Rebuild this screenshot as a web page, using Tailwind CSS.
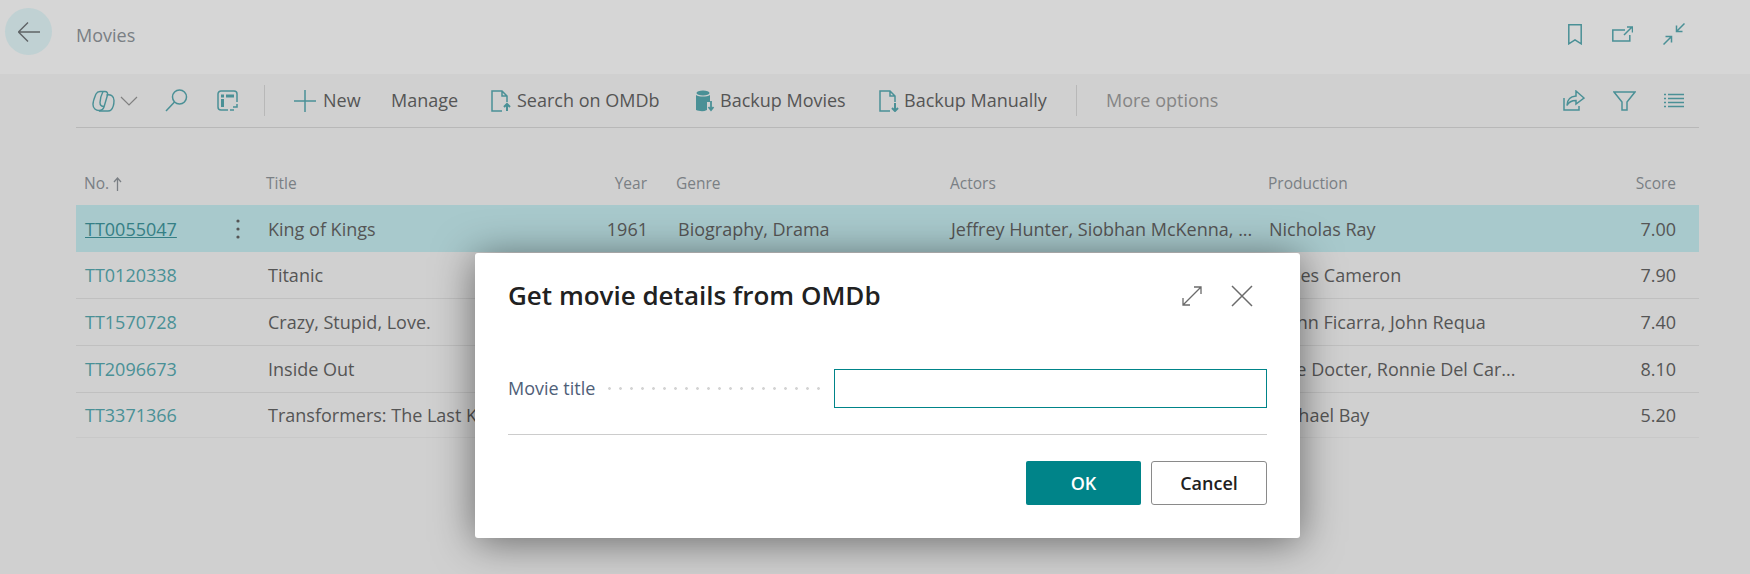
<!DOCTYPE html>
<html lang="en">
<head>
    <meta charset="UTF-8">
    <title>Movies</title>
    <script src="https://cdn.jsdelivr.net/npm/@tailwindcss/browser@4"></script>
</head>
<body class="font-['Open_Sans','Liberation_Sans',sans-serif] bg-[#d0d0d0]">
<div class="relative w-[1750px] h-[574px] overflow-hidden">

    <!-- page header -->
    <header class="flex items-center h-[74px] bg-[#d6d6d6] pl-[5px] pr-[65px]">
        <button class="flex items-center justify-center w-[47px] h-[47px] rounded-full bg-[#c0d1d3] -mt-[11px]">
            <svg width="22" height="20" viewBox="0 0 22 20" fill="none" stroke="#5f6466" stroke-width="1.4"><path d="M0.500 10H22M10 0.500 0.500 10l9.500 9.500"/></svg>
        </button>
        <span class="ml-[24px] text-[18px] text-[#7a7f84] -mt-[3px]">Movies</span>
        <div class="ml-auto flex items-center gap-[30px] -mt-[6px] text-[#4a9096]">
            <svg width="14" height="21" viewBox="0 0 14 21" fill="none" stroke="currentColor" stroke-width="1.5"><path d="M0.800 0.800h12.400v19l-6.200-4-6.200 4z"/></svg>
            <svg width="21" height="16" viewBox="0 0 21 16" fill="none" stroke="currentColor" stroke-width="1.5"><path d="M13 4H0.800v11h17V9M12 9l8-8M15 1h5.500v5.500"/></svg>
            <svg width="22" height="22" viewBox="0 0 22 22" fill="none" stroke="currentColor" stroke-width="1.5"><path d="M21.500 0.500 13.500 8.500M13.500 2.500v6h6M0.500 21.500l8-8M2.500 13.500h6v6"/></svg>
        </div>
    </header>

    <!-- action bar -->
    <div class="mx-[76px] w-[1623px] flex items-center h-[54px] border-b border-[#b8b8b8] text-[18px] text-[#555] text-nowrap">
        <svg class="ml-[16px]" width="23" height="22" viewBox="0 0 23 22" fill="none" stroke="#4a9096" stroke-width="1.4"><path d="M8 1.500h5c2 0 3 1.500 2.500 3.500L12 17c-.8 2.500-2.500 3.500-5 3.500-3 0-6-2-6-6 0-4 2-8 3-10.500C4.800 2.500 6 1.500 8 1.500z"/><path d="M14.500 5c4-1 7.500 1 7.500 5.500 0 4-1.500 8-3 9.500-1 1-2 1-3 1H7M11 1.500c-2 4-3 8-3 11 0 3 2 4 4 4"/></svg>
        <svg class="ml-[5px]" width="18" height="10" viewBox="0 0 18 10" fill="none" stroke="#808080" stroke-width="1.2"><path d="m1 1 8 8 8-8"/></svg>
        <svg class="ml-[27px]" width="23" height="23" viewBox="0 0 23 23" fill="none" stroke="#4a9096" stroke-width="1.5"><circle cx="14.500" cy="8" r="7"/><path d="M9.500 13 1 22"/></svg>
        <svg class="ml-[29px]" width="21" height="21" viewBox="0 0 21 21" fill="none" stroke="#4a9096" stroke-width="1.500"><path d="M11 20H4a3 3 0 0 1-3-3V4a3 3 0 0 1 3-3h13a3 3 0 0 1 3 3v8"/><rect x="4" y="4.500" width="3" height="3" fill="#4a9096" stroke="none"/><rect x="4" y="9" width="3" height="8" fill="#4a9096" stroke="none"/><rect x="9" y="4.500" width="8" height="3" fill="#4a9096" stroke="none"/><path d="M20 14v3h-4M13 20h4"/></svg>
        <div class="ml-[26px] w-px h-[31px] bg-[#b8b8b8]"></div>
        <svg class="ml-[29px]" width="22" height="22" viewBox="0 0 22 22" fill="none" stroke="#4a9096" stroke-width="1.5"><path d="M11 0v22M0 11h22"/></svg>
        <span class="ml-[7px] w-[38px]">New</span>
        <span class="ml-[30px] w-[68px]">Manage</span>
        <svg class="ml-[32px]" width="20" height="22" viewBox="0 0 20 22" fill="none" stroke="#4a9096" stroke-width="1.5"><path d="M11 21H1V1h10l5 5v6M11 1v5h5"/><path d="M16 21v-6M13 17l3-3 3 3" stroke-width="2"/></svg>
        <span class="ml-[6px] w-[145px]">Search on OMDb</span>
        <svg class="ml-[34px]" width="19" height="22" viewBox="0 0 19 22" fill="none"><ellipse cx="7" cy="3" rx="6.500" ry="2.500" fill="#4a9096"/><path d="M0 5c3 2 11 2 14 0v7h-3v8c-4 2-8 1-11 0z" fill="#4a9096"/><path d="M15 11v9M12.500 17l2.500 3 2.500-3" stroke="#4a9096" stroke-width="1.800"/></svg>
        <span class="ml-[5px] w-[127px]">Backup Movies</span>
        <svg class="ml-[32px]" width="20" height="22" viewBox="0 0 20 22" fill="none" stroke="#4a9096" stroke-width="1.5"><path d="M11 21H1V1h10l5 5v6M11 1v5h5"/><path d="M16 13v7M13 18l3 3 3-3" stroke-width="2"/></svg>
        <span class="ml-[5px] w-[144px]">Backup Manually</span>
        <div class="ml-[28px] w-px h-[31px] bg-[#b8b8b8]"></div>
        <span class="ml-[29px] w-[115px] text-[#858585]">More options</span>
        <div class="ml-auto mr-[15px] flex items-center gap-[28px]">
            <svg width="22" height="21" viewBox="0 0 22 21" fill="none" stroke="#4a9096" stroke-width="1.5"><path d="M1 8v12h15v-4M13 1l8 7-8 6v-3.500c-4 0-7 1-9 5 0-6 4-9 9-9.500z"/></svg>
            <svg width="23" height="20" viewBox="0 0 23 20" fill="none" stroke="#4a9096" stroke-width="1.5"><path d="M1 1h21l-8 10v8H9v-8z"/></svg>
            <svg width="20" height="15" viewBox="0 0 20 15" stroke="#4a9096" stroke-width="1.5"><path d="M0 1.500h2M4 1.500h16M0 5.500h2M4 5.500h16M0 9.500h2M4 9.500h16M0 13.500h2M4 13.500h16"/></svg>
        </div>
    </div>

    <!-- list, cells behind the dialog are left empty -->
    <section class="ml-[76px] w-[1623px] mt-[37px] text-[18px] text-[#555]">
        <div class="grid grid-cols-[182px_332px_78px_274px_318px_320px_96px] h-[40px] items-center pb-[3px] text-[15.500px] text-[#7a7f84]">
            <span class="pl-[8px] flex items-center gap-[4px]">No.<svg width="9" height="14" viewBox="0 0 9 14" fill="none" stroke="#7a7f84" stroke-width="1.3"><path d="M4.500 14V1M1 5l3.500-4L8 5"/></svg></span>
            <span class="pl-[8px]">Title</span>
            <span class="text-right pr-[21px]">Year</span>
            <span class="pl-[8px]">Genre</span>
            <span class="pl-[8px]">Actors</span>
            <span class="pl-[8px]">Production</span>
            <span class="text-right">Score</span>
        </div>

        <div class="grid grid-cols-[182px_332px_78px_274px_318px_320px_96px] h-[47px] pt-[1px] items-center bg-[#a8c9cc]">
            <span class="pl-[9px] flex items-center justify-between pr-[18px]"><a class="text-[#357f85] underline">TT0055047</a>
                <svg width="4" height="20" viewBox="0 0 4 20" fill="#555"><circle cx="2" cy="2" r="1.600"/><circle cx="2" cy="10" r="1.600"/><circle cx="2" cy="18" r="1.600"/></svg></span>
            <span class="pl-[10px]">King of Kings</span>
            <span class="text-right pr-[20px]">1961</span>
            <span class="pl-[10px]">Biography, Drama</span>
            <span class="pl-[9px] whitespace-nowrap">Jeffrey Hunter, Siobhan McKenna, ...</span>
            <span class="pl-[9px]">Nicholas Ray</span>
            <span class="text-right">7.00</span>
        </div>
        <div class="grid grid-cols-[182px_332px_78px_274px_318px_320px_96px] h-[47px] pt-[1px] items-center border-b border-[#c0c0c0]">
            <a class="pl-[9px] text-[#4a9096]">TT0120338</a>
            <span class="pl-[10px]">Titanic</span>
            <span></span>
            <span></span>
            <span></span>
            <span class="pl-[9px]">James Cameron</span>
            <span class="text-right">7.90</span>
        </div>
        <div class="grid grid-cols-[182px_332px_78px_274px_318px_320px_96px] h-[47px] pt-[1px] items-center border-b border-[#c0c0c0]">
            <a class="pl-[9px] text-[#4a9096]">TT1570728</a>
            <span class="pl-[10px]">Crazy, Stupid, Love.</span>
            <span></span>
            <span></span>
            <span></span>
            <span class="pl-[9px]">Glenn Ficarra, John Requa</span>
            <span class="text-right">7.40</span>
        </div>
        <div class="grid grid-cols-[182px_332px_78px_274px_318px_320px_96px] h-[47px] pt-[1px] items-center border-b border-[#c0c0c0]">
            <a class="pl-[9px] text-[#4a9096]">TT2096673</a>
            <span class="pl-[10px]">Inside Out</span>
            <span></span>
            <span></span>
            <span></span>
            <span class="pl-[9px] whitespace-nowrap">Pete Docter, Ronnie Del Car...</span>
            <span class="text-right">8.10</span>
        </div>
        <div class="grid grid-cols-[182px_332px_78px_274px_318px_320px_96px] h-[45px] pt-[1px] items-center border-b border-[#c8c8c8]">
            <a class="pl-[9px] text-[#4a9096]">TT3371366</a>
            <span class="pl-[10px] whitespace-nowrap">Transformers: The Last Knight</span>
            <span></span>
            <span></span>
            <span></span>
            <span class="pl-[9px]">Michael Bay</span>
            <span class="text-right">5.20</span>
        </div>
    </section>

    <!-- dialog -->
    <div class="absolute left-[475px] top-[253px] w-[825px] h-[285px] bg-white rounded-[3px] shadow-[0_4px_40px_rgba(0,0,0,0.5)] px-[33px]">
        <div class="flex items-center h-[86px]">
            <h2 class="text-[26px] font-semibold text-[#212121] pb-[2px]">Get movie details from OMDb</h2>
            <div class="ml-auto flex items-center gap-[29px] pr-[14px]">
                <svg width="20" height="20" viewBox="0 0 20 20" fill="none" stroke="#6b6b6b" stroke-width="1.300"><path d="M1 19 19 1M12 1h7v7M1 12v7h7"/></svg>
                <svg width="22" height="22" viewBox="0 0 22 22" fill="none" stroke="#6b6b6b" stroke-width="1.500"><path d="m1 1 20 20M21 1 1 21"/></svg>
            </div>
        </div>
        <div class="flex items-center mt-[30px] h-[39px]">
            <label class="text-[18px] text-[#4f6078] w-[96px] whitespace-nowrap">Movie title</label>
            <div class="w-[220px] h-[3px] bg-[radial-gradient(circle,#d4d4d4_1.300px,transparent_1.500px)] bg-[length:11px_3px]"></div>
            <input class="ml-[10px] w-[433px] h-[39px] border border-[#008489] outline-none">
        </div>
        <div class="mt-[26px] h-px bg-[#cccccc]"></div>
        <div class="flex justify-end gap-[10px] mt-[26px]">
            <button class="w-[115px] h-[44px] rounded-[2px] bg-[#008489] text-white text-[18px] font-semibold">OK</button>
            <button class="w-[116px] h-[44px] rounded-[3px] border border-[#8a8a8a] bg-white text-[#212121] text-[18px] font-semibold">Cancel</button>
        </div>
    </div>
</div>
</body>
</html>
